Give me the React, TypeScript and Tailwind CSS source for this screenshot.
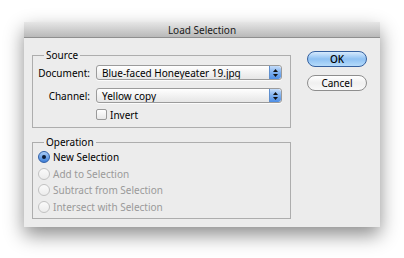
import { useState } from "react";

const font = { fontFamily: '"Noto Sans", "Open Sans", sans-serif' };

const Stepper = () => (
  <div className="flex h-full w-[12px] flex-col items-center justify-center gap-[2px] rounded-r-[3px] border-l border-[#5f8fce] bg-gradient-to-b from-[#c5ddfa] via-[#7fb0ee] to-[#4d8ee6]">
    <svg width="5" height="3" viewBox="0 0 5 3">
      <path d="M2.5 0L5 3H0z" fill="#111" />
    </svg>
    <svg width="5" height="3" viewBox="0 0 5 3">
      <path d="M0 0H5L2.5 3z" fill="#111" />
    </svg>
  </div>
);

const Popup = (props: { value: string }) => (
  <div className="flex h-[15px] w-[186px] items-center overflow-hidden rounded-[3px] border border-[#9b9b9b] bg-gradient-to-b from-white to-[#e6e6e6] shadow-[0_1px_0_rgba(255,255,255,0.8)]">
    <span className="flex-1 pl-[5px] text-[10px] leading-none text-black">
      {props.value}
    </span>
    <Stepper />
  </div>
);

const Radio = (props: { label: string; checked?: boolean; disabled?: boolean }) => (
  <div className="flex h-[16.6px] items-center gap-[3px]">
    {props.checked ? (
      <div className="flex h-[12px] w-[12px] items-center justify-center rounded-full border border-[#2f5fa8] bg-gradient-to-b from-[#a9cdf6] to-[#3d7fd8]">
        <div className="h-[4px] w-[4px] rounded-full bg-[#0b1a33]" />
      </div>
    ) : (
      <div className="h-[12px] w-[12px] rounded-full border border-[#c2c2c2] bg-gradient-to-b from-[#fafafa] to-[#ececec]" />
    )}
    <span
      className={
        props.disabled
          ? "text-[10px] leading-none text-[#9a9a9a]"
          : "text-[10px] leading-none text-black"
      }
    >
      {props.label}
    </span>
  </div>
);

export default function App() {
  const [invert, setInvert] = useState(false);
  return (
    <div className="h-[258px] w-[404px] bg-white pl-[24px] pt-[22px]" style={font}>
      <div className="flex h-[205px] w-[356px] flex-col bg-[#ececec] shadow-[0_8px_18px_rgba(0,0,0,0.45)]">
        {/* Title bar */}
        <div className="flex h-[16px] items-center justify-center border-b border-[#8f8f8f] bg-gradient-to-b from-[#e6e6e6] to-[#b9b9b9]">
          <span className="text-[10px] leading-none text-[#1a1a1a]">Load Selection</span>
        </div>

        <div className="flex pl-[8px] pt-[11px]">
          <div className="flex w-[259px] flex-col gap-[8px]">
            <fieldset className="h-[79px] border border-[#adadad]">
              <legend className="ml-[11px] px-[2px] text-[10px] leading-[13px] text-black">
                Source
              </legend>
              <div className="mt-[3px] grid grid-cols-[57px_186px] items-center gap-x-[6px] gap-y-[8px]">
                <span className="text-right text-[10px] leading-none text-black">Document:</span>
                <Popup value="Blue-faced Honeyeater 19.jpg" />
                <span className="text-right text-[10px] leading-none text-black">Channel:</span>
                <Popup value="Yellow copy" />
                <span />
                <div
                  className="-mt-[2px] flex cursor-default items-center gap-[3px]"
                  onClick={() => setInvert(!invert)}
                >
                  <div className="flex h-[11px] w-[11px] items-center justify-center rounded-[2px] border border-[#9a9a9a] bg-gradient-to-b from-white to-[#e8e8e8]">
                    {invert && (
                      <svg width="8" height="8" viewBox="0 0 8 8">
                        <path d="M1 4l2 2 4-5" stroke="#111" strokeWidth="1.5" fill="none" />
                      </svg>
                    )}
                  </div>
                  <span className="text-[10px] leading-none text-black">Invert</span>
                </div>
              </div>
            </fieldset>

            <fieldset className="h-[83px] border border-[#adadad] pl-[5px]">
              <legend className="ml-[6px] px-[2px] text-[10px] leading-[13px] text-black">
                Operation
              </legend>
              <div className="flex flex-col">
                <Radio label="New Selection" checked />
                <Radio label="Add to Selection" disabled />
                <Radio label="Subtract from Selection" disabled />
                <Radio label="Intersect with Selection" disabled />
              </div>
            </fieldset>
          </div>

          <div className="ml-[16px] mt-[2px] flex flex-col gap-[8px]">
            <button className="flex h-[16px] w-[60px] items-center justify-center rounded-full border border-[#35609f] bg-gradient-to-b from-[#d6eafd] via-[#8ec1f3] to-[#b5dbfb] text-[10px] font-medium leading-none text-black">
              OK
            </button>
            <button className="flex h-[16px] w-[60px] items-center justify-center rounded-full border border-[#8e8e8e] bg-gradient-to-b from-white via-[#f0f0f0] to-[#f8f8f8] text-[10px] leading-none text-black">
              Cancel
            </button>
          </div>
        </div>
      </div>
    </div>
  );
}
